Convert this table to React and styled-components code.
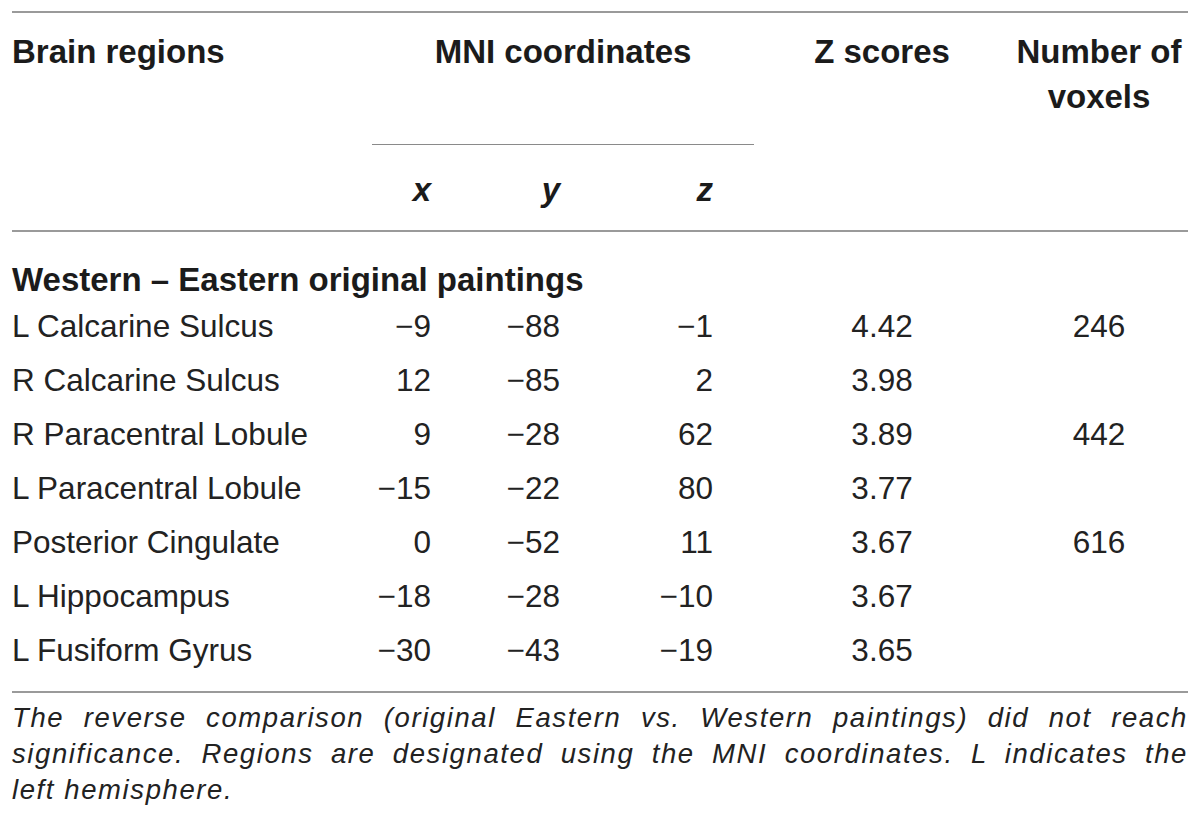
import React from "react";
import styled, { createGlobalStyle } from "styled-components";

const GlobalStyle = createGlobalStyle`
  html, body {
    margin: 0;
    padding: 0;
    background: #ffffff;
  }
  body {
    font-family: "Liberation Sans", Arial, Helvetica, sans-serif;
    color: #1b1b1b;
  }
`;

// column widths and right padding, measured off the printed table
const columns = [
  { key: "region", width: 360, align: "left", pad: 0 },
  { key: "x", width: 80, align: "right", pad: 21 },
  { key: "y", width: 129, align: "right", pad: 21 },
  { key: "z", width: 173, align: "right", pad: 41 },
  { key: "score", width: 256, align: "center", pad: 0 },
  { key: "voxels", width: 178, align: "center", pad: 0 },
];

const rows = [
  { region: "L Calcarine Sulcus", x: "−9", y: "−88", z: "−1", score: "4.42", voxels: "246" },
  { region: "R Calcarine Sulcus", x: "12", y: "−85", z: "2", score: "3.98", voxels: "" },
  { region: "R Paracentral Lobule", x: "9", y: "−28", z: "62", score: "3.89", voxels: "442" },
  { region: "L Paracentral Lobule", x: "−15", y: "−22", z: "80", score: "3.77", voxels: "" },
  { region: "Posterior Cingulate", x: "0", y: "−52", z: "11", score: "3.67", voxels: "616" },
  { region: "L Hippocampus", x: "−18", y: "−28", z: "−10", score: "3.67", voxels: "" },
  { region: "L Fusiform Gyrus", x: "−30", y: "−43", z: "−19", score: "3.65", voxels: "" },
];

const RULE = "#9a9a9a";

const Page = styled.div`
  padding: 11px 12px 0;
  width: 1176px;
`;

const Table = styled.table`
  width: 1176px;
  table-layout: fixed;
  border-collapse: separate;
  border-spacing: 0;
  border-top: 2px solid ${RULE};
  border-bottom: 2px solid ${RULE};
`;

const HeadCell = styled.th`
  font-size: 33px;
  font-weight: 700;
  line-height: 45px;
  vertical-align: top;
  text-align: ${(p) => p.$align || "left"};
  padding: 16px ${(p) => p.$pad || 0}px 0 0;
  border-bottom: 2px solid ${RULE};
`;

const GroupHead = styled.th`
  font-size: 33px;
  font-weight: 700;
  line-height: 45px;
  text-align: center;
  vertical-align: top;
  padding: 16px 0 70px;
  border-bottom: 1px solid #8a8a8a;
`;

const AxisHead = styled.th`
  font-size: 33px;
  font-weight: 700;
  font-style: italic;
  line-height: 45px;
  text-align: right;
  vertical-align: top;
  padding: 22px ${(p) => p.$pad}px 18px 0;
  border-bottom: 2px solid ${RULE};
`;

const SectionCell = styled.td`
  font-size: 33px;
  font-weight: 700;
  line-height: 36px;
  padding: 30px 0 1px;
  white-space: nowrap;
`;

const DataCell = styled.td`
  font-size: 31.5px;
  line-height: 54px;
  white-space: nowrap;
  color: #222;
  text-align: ${(p) => p.$align};
  padding: 0 ${(p) => p.$pad}px ${(p) => (p.$last ? 14 : 0)}px 0;
`;

const Note = styled.div`
  margin-top: 7px;
  font-size: 27.5px;
  font-style: italic;
  line-height: 36px;
  letter-spacing: 1.6px;
  color: #222;
`;

const NoteLine = styled.div`
  text-align: ${(p) => (p.$last ? "left" : "justify")};
  text-align-last: ${(p) => (p.$last ? "left" : "justify")};
  text-justify: inter-word;
  white-space: nowrap;
`;

export default function App() {
  return (
    <Page>
      <GlobalStyle />
      <Table>
        <colgroup>
          {columns.map((c) => (
            <col key={c.key} style={{ width: c.width }} />
          ))}
        </colgroup>
        <thead>
          <tr>
            <HeadCell rowSpan={2}>Brain regions</HeadCell>
            <GroupHead colSpan={3}>MNI coordinates</GroupHead>
            <HeadCell rowSpan={2} $align="center">
              Z scores
            </HeadCell>
            <HeadCell rowSpan={2} $align="center">
              Number of voxels
            </HeadCell>
          </tr>
          <tr>
            <AxisHead $pad={columns[1].pad}>x</AxisHead>
            <AxisHead $pad={columns[2].pad}>y</AxisHead>
            <AxisHead $pad={columns[3].pad}>z</AxisHead>
          </tr>
        </thead>
        <tbody>
          <tr>
            <SectionCell colSpan={6}>Western – Eastern original paintings</SectionCell>
          </tr>
          {rows.map((r, i) => (
            <tr key={r.region}>
              {columns.map((c) => (
                <DataCell
                  key={c.key}
                  $align={c.align}
                  $pad={c.pad}
                  $last={i === rows.length - 1}
                >
                  {r[c.key]}
                </DataCell>
              ))}
            </tr>
          ))}
        </tbody>
      </Table>
      <Note>
        <NoteLine>
          The reverse comparison (original Eastern vs. Western paintings) did not reach
        </NoteLine>
        <NoteLine>
          significance. Regions are designated using the MNI coordinates. L indicates the
        </NoteLine>
        <NoteLine $last>left hemisphere.</NoteLine>
      </Note>
    </Page>
  );
}
